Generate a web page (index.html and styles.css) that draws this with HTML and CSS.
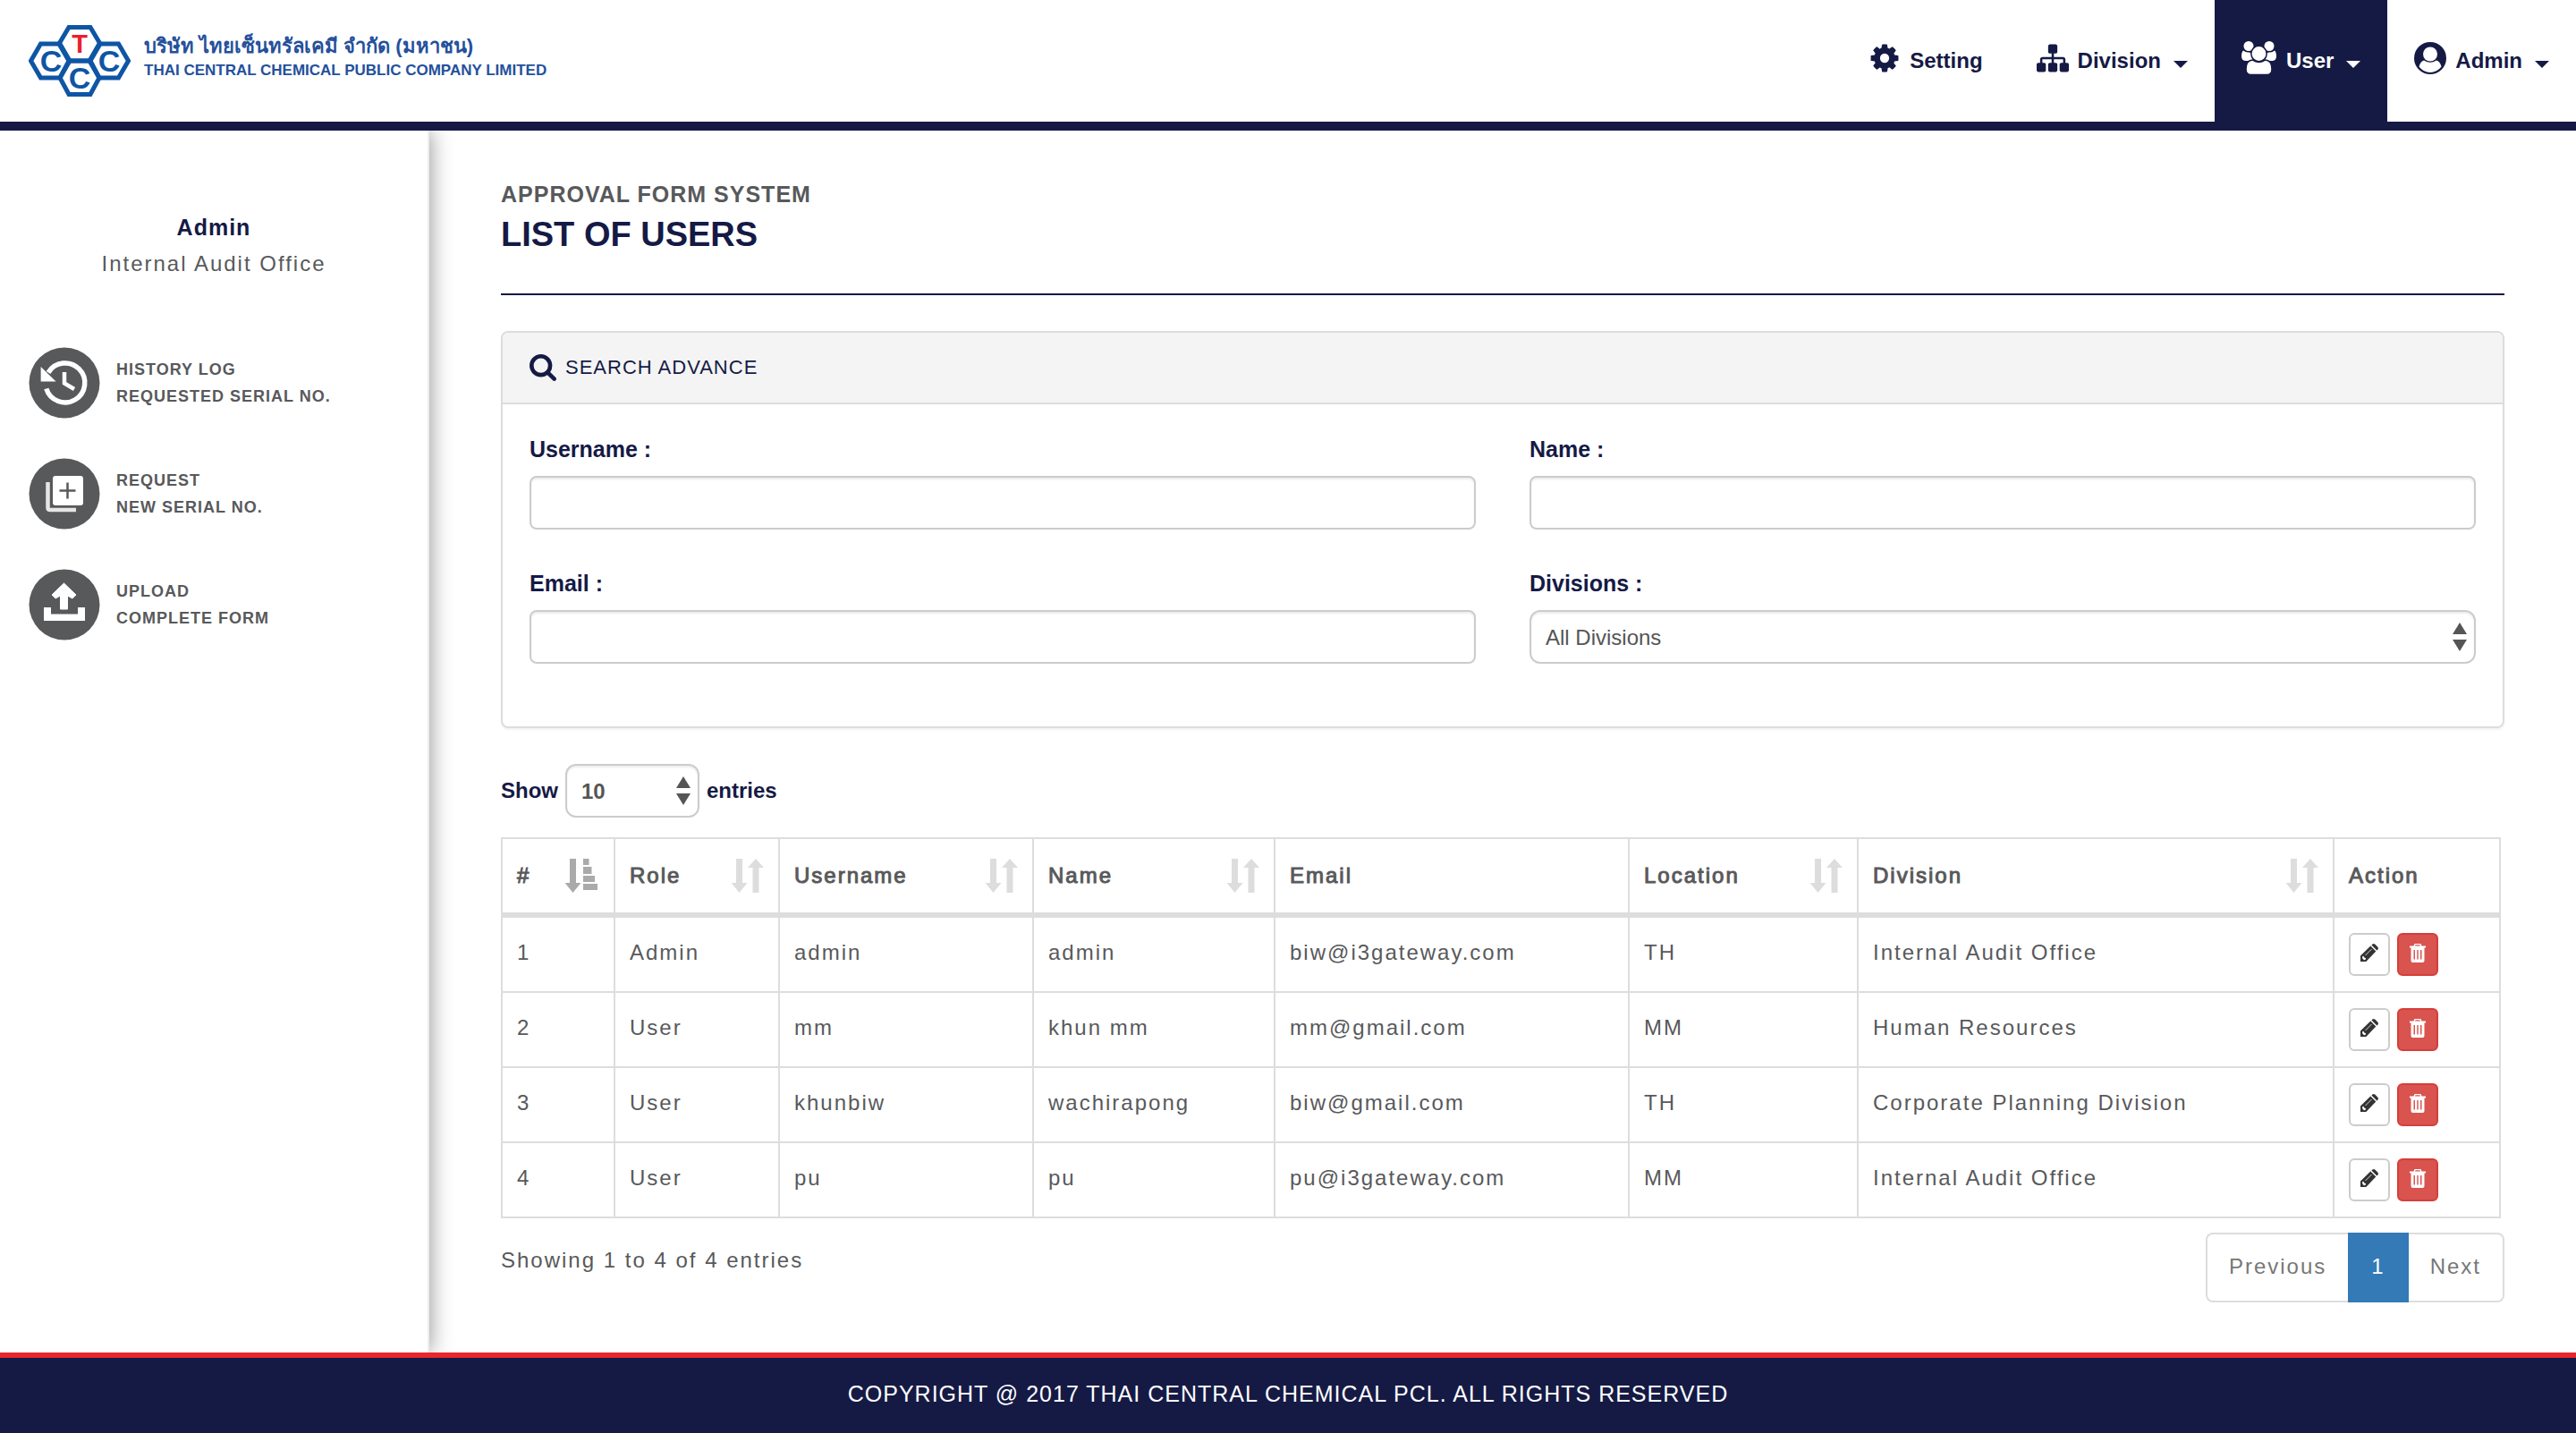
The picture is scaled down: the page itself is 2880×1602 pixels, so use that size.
FILE: index.html
```html
<!DOCTYPE html>
<html lang="en">
<head>
<meta charset="utf-8">
<meta name="viewport" content="width=device-width, initial-scale=1">
<title>List of Users</title>
<link rel="stylesheet" href="styles.css">
</head>
<body>
<svg class="sprite" aria-hidden="true">
  <symbol id="sort" viewBox="0 0 36 38">
    <path d="M5 0h7v27h5.500l-9 11-9-11H5zM23.500 38V10H18L27 0l9 10h-5.500v28z"/>
  </symbol>
  <symbol id="sort-asc" viewBox="0 0 38 38">
    <path d="M5 0h7v27h5.500l-9 11-9-11H5zM20 0h6.500v7H20zM20 9h9.500v8H20zM20 19h13v7H20zM20 28h16v7H20z"/>
  </symbol>
  <symbol id="pencil" viewBox="0 0 20 20">
    <path d="M0 20v-6.500L11.300 2.600l6 6L6.300 20zM12.400 1.600 13.500.6q1.300-1.200 2.700 0l3.200 3.100q1.100 1.300 0 2.700l-1 1.100z"/>
    <path d="M2 14.500l1.500-.8.800 1.900 1.900.6-.8 1.700-1.400.4-1.700-1.900z" fill="#fff"/>
    <path d="M5.500 13l7-7" stroke="#fff" stroke-width=".8"/>
  </symbol>
  <symbol id="trash" viewBox="0 0 18 21">
    <path fill-rule="evenodd" d="M0 2.500h4.500L5.500 0h7l1 2.500H18v2h-1.500V19q0 2-2 2h-11q-2 0-2-2V4.500H0zM6.500 1.300 6 2.500h6l-.5-1.200zM4.500 7v10.500H6V7zM8.300 7v10.500h1.400V7zM12 7v10.500h1.500V7z"/>
  </symbol>
</svg>

<header class="topbar">
  <a class="brand" href="#">
    <svg class="brand-mark" viewBox="0 0 114 80" aria-hidden="true">
      <g fill="none" stroke="#0f55a5" stroke-width="5">
        <path d="M45 2.500h24L80 21 69 40H45L34 21z"/>
        <path d="M2.500 40l11-19H35l11 19-11 19H13.500z"/>
        <path d="M111.500 40l-11-19H79L68 40l11 19h21.500z"/>
        <path d="M45 40h24l10 19-10 18.500H45L35 59z"/>
      </g>
      <g class="brand-letters">
        <text class="brand-t" x="57" y="31">T</text>
        <text x="25" y="52">C</text>
        <text x="90" y="52">C</text>
        <text x="57" y="71">C</text>
      </g>
    </svg>
    <span class="brand-text">
      <span class="brand-th" lang="th">บริษัท ไทยเซ็นทรัลเคมี จำกัด (มหาชน)</span>
      <span class="brand-en">THAI CENTRAL CHEMICAL PUBLIC COMPANY LIMITED</span>
    </span>
  </a>
  <nav class="nav">
    <a class="nav-item" href="#">
      <svg width="36" height="36" viewBox="0 0 1792 1792" fill="currentColor" aria-hidden="true"><path d="M1152 896q0-106-75-181t-181-75-181 75-75 181 75 181 181 75 181-75 75-181zm512-109v222q0 12-8 23t-20 13l-185 28q-19 54-39 91 35 50 107 138 10 12 10 25t-9 23q-27 37-99 108t-94 71q-12 0-26-9l-138-108q-44 23-91 38-16 136-29 186-7 28-36 28h-222q-14 0-24.500-8.500t-11.500-21.500l-28-184q-49-16-90-37l-141 107q-10 9-25 9-14 0-25-11-126-114-165-168-7-10-7-23 0-12 8-23 15-21 51-66.500t54-70.500q-27-50-41-99l-183-27q-13-2-21-12.500t-8-23.500v-222q0-12 8-23t19-13l186-28q14-46 39-92-40-57-107-138-10-12-10-24 0-10 9-23 26-36 98.500-107.500t94.500-71.500q13 0 26 10l138 107q44-23 91-38 16-136 29-186 7-28 36-28h222q14 0 24.500 8.500t11.500 21.500l28 184q49 16 90 37l142-107q9-9 24-9 13 0 25 10 129 119 165 170 7 8 7 22 0 12-8 23-15 21-51 66.500t-54 70.500q26 50 41 98l183 28q13 2 21 12.500t8 23.500z"/></svg>
      <span>Setting</span>
    </a>
    <a class="nav-item" href="#">
      <svg width="36" height="36" viewBox="0 0 1792 1792" fill="currentColor" aria-hidden="true"><path d="M1792 1248v320q0 40-28 68t-68 28h-320q-40 0-68-28t-28-68v-320q0-40 28-68t68-28h96v-192h-512v192h96q40 0 68 28t28 68v320q0 40-28 68t-68 28h-320q-40 0-68-28t-28-68v-320q0-40 28-68t68-28h96v-192h-512v192h96q40 0 68 28t28 68v320q0 40-28 68t-68 28h-320q-40 0-68-28t-28-68v-320q0-40 28-68t68-28h96v-192q0-52 38-90t90-38h512v-192h-96q-40 0-68-28t-28-68v-320q0-40 28-68t68-28h320q40 0 68 28t28 68v320q0 40-28 68t-68 28h-96v192h512q52 0 90 38t38 90v192h96q40 0 68 28t28 68z"/></svg>
      <span>Division</span>
      <i class="caret"></i>
    </a>
    <a class="nav-item active" href="#">
      <svg width="40" height="38" viewBox="0 0 40 38" fill="#fff" aria-hidden="true">
        <circle cx="8" cy="5.500" r="5.500"/><circle cx="31" cy="5.500" r="5.500"/>
        <path d="M2 10.500q3 2.500 6 2 3 0 3 2.500l2 7H5q-5 0-5-5 0-5 2-6.500zM37 10.500q-3 2.500-6 2-3 0-3 2.500l-2 7h8q5 0 5-5 0-5-2-6.500z"/>
        <g stroke="#151a45" stroke-width="1.500">
          <path d="M12 21q7.500 5 15 0 7 1 7 10 0 6.500-5.500 6.500h-18Q5 37.500 5 31q0-9 7-10z"/>
          <circle cx="19.500" cy="14" r="8.700"/>
        </g>
      </svg>
      <span>User</span>
      <i class="caret"></i>
    </a>
    <a class="nav-item" href="#">
      <svg width="36" height="36" viewBox="0 0 36 36" aria-hidden="true">
        <circle cx="18" cy="18" r="18" fill="#151a45"/>
        <path d="M11 20.500q7 4.500 14 0 3.500.5 5.500 7Q25.500 34 18 34T5.500 27.500q2-6.500 5.500-7z" fill="#fff"/>
        <circle cx="18" cy="13.500" r="8" fill="#fff"/>
      </svg>
      <span>Admin</span>
      <i class="caret"></i>
    </a>
  </nav>
</header>

<div class="layout">
  <aside class="sidebar">
    <div class="profile">
      <strong>Admin</strong>
      <span>Internal Audit Office</span>
    </div>
    <nav class="menu">
      <a href="#">
        <svg width="80" height="80" viewBox="0 0 80 80" aria-hidden="true">
          <circle cx="40" cy="40" r="39.500" fill="#58595b"/>
          <path d="M19.800 46.500A22 22 0 1 0 22 28.500" fill="none" stroke="#fff" stroke-width="5.500"/>
          <path d="M13.600 22v16.500h17z" fill="#fff"/>
          <path d="M40 28v12.500L51 47" fill="none" stroke="#fff" stroke-width="4.500"/>
        </svg>
        <span>HISTORY LOG<br>REQUESTED SERIAL NO.</span>
      </a>
      <a href="#">
        <svg width="80" height="80" viewBox="0 0 80 80" aria-hidden="true">
          <circle cx="40" cy="40" r="39.500" fill="#58595b"/>
          <rect x="27" y="20" width="34" height="33" rx="3" fill="#fff"/>
          <path d="M43.500 27.500v18M34.500 36.500h18" stroke="#58595b" stroke-width="2.500"/>
          <path d="M21.500 27v28.500q0 2.500 2.500 2.500h29" fill="none" stroke="#e6e6e6" stroke-width="4.500"/>
        </svg>
        <span>REQUEST<br>NEW SERIAL NO.</span>
      </a>
      <a href="#">
        <svg width="80" height="80" viewBox="0 0 80 80" aria-hidden="true">
          <circle cx="40" cy="40" r="39.500" fill="#58595b"/>
          <path d="M39.500 16 53 29l-4 4-5.500-3v15h-8V30L30 33l-4-4z" fill="#fff" stroke="#fff" stroke-linejoin="round"/>
          <path d="M17 43h8v7.500h30V43h8v15H17z" fill="#fff"/>
        </svg>
        <span>UPLOAD<br>COMPLETE FORM</span>
      </a>
    </nav>
  </aside>

  <main class="content">
    <div class="page-head">
      <p>APPROVAL FORM SYSTEM</p>
      <h1>LIST OF USERS</h1>
    </div>

    <section class="panel">
      <h2 class="panel-head">
        <svg width="30" height="30" viewBox="64 128 1664 1664" fill="currentColor" aria-hidden="true"><path d="M1216 832q0-185-131.500-316.500t-316.500-131.500-316.500 131.500-131.500 316.500 131.500 316.500 316.500 131.500 316.500-131.500 131.500-316.500zm512 832q0 52-38 90t-90 38q-54 0-90-38l-343-342q-179 124-399 124-143 0-273.500-55.500t-225-150-150-225-55.500-273.500 55.500-273.500 150-225 225-150 273.500-55.500 273.500 55.500 225 150 150 225 55.500 273.500q0 220-124 399l343 343q37 37 37 90z"/></svg>
        SEARCH ADVANCE
      </h2>
      <form class="panel-body">
        <div class="field"><label for="username">Username :</label><input class="control" id="username" type="text"></div>
        <div class="field"><label for="name">Name :</label><input class="control" id="name" type="text"></div>
        <div class="field"><label for="email">Email :</label><input class="control" id="email" type="text"></div>
        <div class="field">
          <label for="divisions">Divisions :</label>
          <span class="select"><select class="control" id="divisions"><option>All Divisions</option></select></span>
        </div>
      </form>
    </section>

    <div class="length">
      <label for="length">Show</label>
      <span class="select"><select class="control" id="length"><option>10</option></select></span>
      <span>entries</span>
    </div>

    <table class="users">
      <colgroup>
        <col class="c-no"><col class="c-role"><col class="c-username"><col class="c-name"><col class="c-email"><col class="c-location"><col><col class="c-action">
      </colgroup>
      <thead>
        <tr>
          <th><div>#<svg class="asc" width="38" height="38"><use href="#sort-asc"/></svg></div></th>
          <th><div>Role<svg width="36" height="38"><use href="#sort"/></svg></div></th>
          <th><div>Username<svg width="36" height="38"><use href="#sort"/></svg></div></th>
          <th><div>Name<svg width="36" height="38"><use href="#sort"/></svg></div></th>
          <th><div>Email</div></th>
          <th><div>Location<svg width="36" height="38"><use href="#sort"/></svg></div></th>
          <th><div>Division<svg width="36" height="38"><use href="#sort"/></svg></div></th>
          <th><div>Action</div></th>
        </tr>
      </thead>
      <tbody>
        <tr>
          <td>1</td><td>Admin</td><td>admin</td><td>admin</td><td>biw@i3gateway.com</td><td>TH</td><td>Internal Audit Office</td>
          <td><div class="actions"><button type="button" class="btn" aria-label="Edit"><svg width="20" height="20"><use href="#pencil"/></svg></button><button type="button" class="btn danger" aria-label="Delete"><svg width="18" height="21"><use href="#trash"/></svg></button></div></td>
        </tr>
        <tr>
          <td>2</td><td>User</td><td>mm</td><td>khun mm</td><td>mm@gmail.com</td><td>MM</td><td>Human Resources</td>
          <td><div class="actions"><button type="button" class="btn" aria-label="Edit"><svg width="20" height="20"><use href="#pencil"/></svg></button><button type="button" class="btn danger" aria-label="Delete"><svg width="18" height="21"><use href="#trash"/></svg></button></div></td>
        </tr>
        <tr>
          <td>3</td><td>User</td><td>khunbiw</td><td>wachirapong</td><td>biw@gmail.com</td><td>TH</td><td>Corporate Planning Division</td>
          <td><div class="actions"><button type="button" class="btn" aria-label="Edit"><svg width="20" height="20"><use href="#pencil"/></svg></button><button type="button" class="btn danger" aria-label="Delete"><svg width="18" height="21"><use href="#trash"/></svg></button></div></td>
        </tr>
        <tr>
          <td>4</td><td>User</td><td>pu</td><td>pu</td><td>pu@i3gateway.com</td><td>MM</td><td>Internal Audit Office</td>
          <td><div class="actions"><button type="button" class="btn" aria-label="Edit"><svg width="20" height="20"><use href="#pencil"/></svg></button><button type="button" class="btn danger" aria-label="Delete"><svg width="18" height="21"><use href="#trash"/></svg></button></div></td>
        </tr>
      </tbody>
    </table>

    <div class="table-foot">
      <p>Showing 1 to 4 of 4 entries</p>
      <nav class="pages" aria-label="Pages">
        <a href="#">Previous</a><a class="current" href="#">1</a><a href="#">Next</a>
      </nav>
    </div>
  </main>
</div>

<footer class="footer">COPYRIGHT @ 2017 THAI CENTRAL CHEMICAL PCL. ALL RIGHTS RESERVED</footer>
</body>
</html>
```
FILE: styles.css
```css
:root {
  --navy: #151a45;
  --gray: #58595b;
  --line: #ddd;
  --sans: "Liberation Sans", Arial, sans-serif;
}

* { box-sizing: border-box; }

body {
  display: flex;
  flex-direction: column;
  min-height: 100vh;
  margin: 0;
  background: #fff;
  color: var(--gray);
  font: 24px/34px var(--sans);
  letter-spacing: 2px;
}

a { color: inherit; text-decoration: none; }
p, h1, h2 { margin: 0; }
.sprite { display: none; }

/* Top bar */
.topbar {
  position: relative;
  z-index: 1;
  display: flex;
  justify-content: space-between;
  height: 146px;
  border-bottom: 10px solid var(--navy);
  background: #fff;
  letter-spacing: 0;
}

.brand {
  display: flex;
  align-items: center;
  gap: 15px;
  padding-left: 32px;
  white-space: nowrap;
}
.brand-mark { width: 114px; height: 80px; }
.brand-letters {
  fill: #0f55a5;
  font: bold 34px var(--sans);
  text-anchor: middle;
}
.brand-t { fill: #ee1c2e; font-size: 29px; }
.brand-text {
  display: flex;
  flex-direction: column;
  padding-bottom: 8px;
  color: #24509b;
  font-weight: bold;
}
.brand-th { font-size: 22px; line-height: 30px; }
.brand-en { font-size: 17px; line-height: 24px; }

.nav { display: flex; }
.nav-item {
  display: flex;
  align-items: center;
  gap: 10px;
  padding: 0 30px;
  color: var(--navy);
  font-weight: bold;
}
.nav-item svg { margin-bottom: 6px; }
.nav-item.active { background: var(--navy); color: #fff; }
.caret {
  margin: 8px 0 0 4px;
  border: 8px solid transparent;
  border-top-color: currentColor;
  border-bottom: 0;
}

/* Sidebar */
.layout { display: flex; flex: 1; }
.sidebar {
  flex: none;
  width: 480px;
  padding-top: 90px;
  border-right: 2px solid #eee;
  box-shadow: 0 0 24px rgba(0, 0, 0, .45);
}
.profile {
  display: flex;
  flex-direction: column;
  gap: 6px;
  text-align: center;
}
.profile strong {
  color: var(--navy);
  font-size: 25px;
  line-height: 36px;
  letter-spacing: 1px;
}
.menu {
  display: flex;
  flex-direction: column;
  gap: 44px;
  padding: 76px 0 0 32px;
}
.menu a {
  display: flex;
  align-items: center;
  gap: 18px;
  font: bold 18px/30px var(--sans);
  letter-spacing: 1px;
}

/* Main column */
.content { flex: 1; min-width: 0; padding: 54px 80px 56px; }
.page-head { padding-bottom: 38px; border-bottom: 2px solid var(--navy); }
.page-head p { font: bold 25px/34px var(--sans); letter-spacing: 1px; }
.page-head h1 {
  color: var(--navy);
  font: bold 38px/56px var(--sans);
  letter-spacing: 0;
}

.panel {
  margin-top: 40px;
  border: 2px solid var(--line);
  border-radius: 8px;
  box-shadow: 0 2px 2px rgba(0, 0, 0, .05);
}
.panel-head {
  display: flex;
  align-items: center;
  gap: 10px;
  height: 80px;
  padding: 0 30px;
  border-bottom: 2px solid var(--line);
  border-radius: 6px 6px 0 0;
  background: #f4f4f4;
  color: var(--navy);
  font-size: 22px;
  font-weight: normal;
  letter-spacing: 1px;
}
.panel-body {
  display: grid;
  grid-template-columns: 1fr 1fr;
  gap: 40px 60px;
  padding: 30px 30px 70px;
}
.field label {
  display: block;
  margin-bottom: 10px;
  color: var(--navy);
  font: bold 25px/40px var(--sans);
  letter-spacing: 0;
}

.control {
  display: block;
  width: 100%;
  height: 60px;
  padding: 0 16px;
  border: 2px solid #ccc;
  border-radius: 8px;
  background: #fff;
  box-shadow: inset 0 2px 2px rgba(0, 0, 0, .075);
  color: #555;
  font: 24px var(--sans);
  letter-spacing: 0;
  appearance: none;
}
.select { display: block; position: relative; }
.select .control { border-radius: 12px; }
.select::before,
.select::after {
  content: "";
  position: absolute;
  right: 10px;
  border: 8px solid transparent;
  pointer-events: none;
}
.select::before { top: 14px; border-top: 0; border-bottom: 13px solid #555; }
.select::after { bottom: 14px; border-bottom: 0; border-top: 13px solid #555; }

.length {
  display: flex;
  align-items: center;
  gap: 8px;
  margin: 40px 0 22px;
  color: var(--navy);
  font-weight: bold;
  letter-spacing: 0;
}
.length .select { width: 150px; }
.length .control { font-weight: bold; }

/* Users table */
.users {
  width: calc(100% - 4px);
  border-collapse: collapse;
  table-layout: fixed;
}
.c-no { width: 126px; }
.c-role { width: 184px; }
.c-username { width: 284px; }
.c-name { width: 270px; }
.c-email { width: 396px; }
.c-location { width: 256px; }
.c-action { width: 186px; }
.users th,
.users td {
  height: 84px;
  padding: 0 16px 4px;
  border: 2px solid var(--line);
  text-align: left;
}
.users td:last-child { padding-bottom: 0; }
.users tr:first-child > * { height: 86px; }
.users th {
  padding-bottom: 0;
  border-bottom-width: 6px;
  font-weight: normal;
  -webkit-text-stroke: 1px currentColor;
}
.users th div { display: flex; align-items: center; justify-content: space-between; }
.users th svg { fill: var(--line); -webkit-text-stroke: 0; }
.users th .asc { fill: #aaa; }

.actions { display: flex; gap: 8px; }
.btn {
  display: flex;
  align-items: center;
  justify-content: center;
  width: 46px;
  height: 48px;
  padding: 0 0 4px;
  border: 2px solid #ccc;
  border-radius: 6px;
  background: #fff;
  color: #333;
  fill: currentColor;
}
.btn.danger { border-color: #d43f3a; background: #d9534f; color: #fff; }

.table-foot { display: flex; justify-content: space-between; margin-top: 16px; }
.table-foot p { padding-top: 14px; }
.pages { display: flex; line-height: 72px; color: #777; }
.pages a { padding: 0 24px 2px; border: 2px solid var(--line); }
.pages a:first-child { border-right: 0; border-radius: 8px 0 0 8px; }
.pages a:last-child { border-left: 0; border-radius: 0 8px 8px 0; }
.pages .current { border-color: #337ab7; background: #337ab7; color: #fff; }

.footer {
  position: relative;
  height: 90px;
  border-top: 6px solid #e8262d;
  background: var(--navy);
  color: #fff;
  font-size: 25px;
  line-height: 80px;
  letter-spacing: 1px;
  text-align: center;
}
```
